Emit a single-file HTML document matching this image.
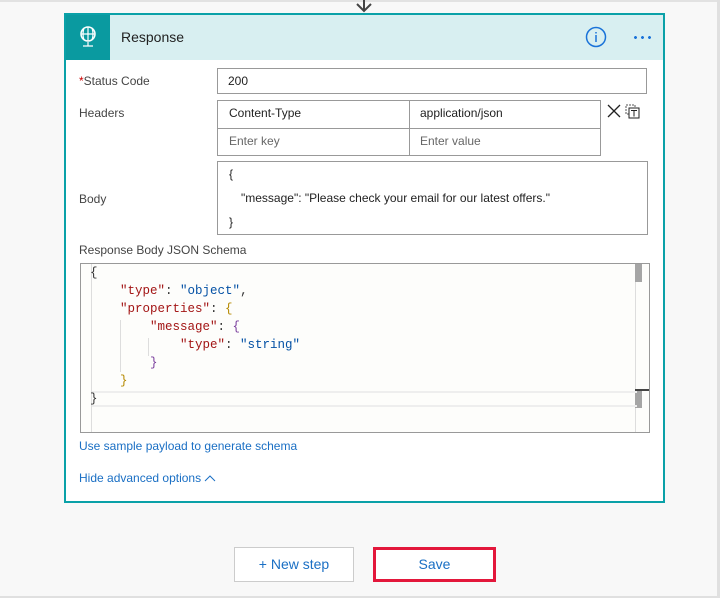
<!DOCTYPE html>
<html><head><style>
*{box-sizing:border-box;margin:0;padding:0}
body{width:720px;height:598px;background:#f8f8f8;font-family:"Segoe UI","Liberation Sans",sans-serif;font-size:12px;color:#333;position:relative;overflow:hidden}
.abs{position:absolute}
.card{left:64px;top:13px;width:601px;height:490px;border:2px solid #0aa1a8;background:#fff}
.hdr{left:0;top:0;width:597px;height:45px;background:#d8eff1}
.ic{left:0;top:0;width:44px;height:45px;background:#0a9aa0}
.lbl{color:#444;font-size:12px}
.inp{border:1px solid #999;background:#fff;font-size:12px;color:#222;padding-left:10px}
.code{font-family:"Liberation Mono",monospace;font-size:12.5px;white-space:pre;line-height:18px}
.k{color:#a31515}.v{color:#0451a5}.b{color:#7a3e9d}.y{color:#b58900}
.link{color:#1a6fc4;font-size:12px}
</style></head><body>
<div class="abs" style="left:0;top:0;width:720px;height:2px;background:#e2e2e2"></div>
<div class="abs" style="left:717px;top:0;width:3px;height:598px;background:#e0e0e0"></div>
<div class="abs" style="left:0;top:596px;width:720px;height:2px;background:#e0e0e0"></div>
<svg class="abs" style="left:354px;top:0" width="20" height="14"><path d="M10 0v10M3 4l7 7 7-7" stroke="#444" stroke-width="2" fill="none"/></svg>
<div class="abs card">
 <div class="abs hdr">
  <div class="abs ic"><svg width="44" height="45"><circle cx="22" cy="19" r="7" stroke="#fff" stroke-width="1.5" fill="none"/><path d="M15 19h14M22 12v14M18 13q-2 6 0 12M26 13q2 6 0 12M22 27v4M17 31h10" stroke="#fff" stroke-width="1.2" fill="none"/></svg></div>
  <div class="abs" style="left:55px;top:14px;font-size:14px;color:#222">Response</div>
  <svg class="abs" style="left:519px;top:11px" width="22" height="22"><circle cx="11" cy="11" r="9.5" stroke="#1a73d9" stroke-width="1.5" fill="none"/><path d="M11 9v7M11 6v1.5" stroke="#1a73d9" stroke-width="1.5"/></svg>
  <div class="abs" style="left:566px;top:21px;width:20px;height:3px;background:radial-gradient(circle,#1a73d9 1.3px,transparent 1.6px) 0 0/7px 3px"></div>
 </div>
 <div class="abs lbl" style="left:13px;top:59px"><span style="color:#c00">*</span>Status Code</div>
 <div class="abs inp" style="left:151px;top:53px;width:430px;height:26px;line-height:24px">200</div>
 <div class="abs lbl" style="left:13px;top:91px">Headers</div>
 <div class="abs" style="left:151px;top:85px;width:384px;height:56px;border:1px solid #999">
  <div class="abs" style="left:0;top:27px;width:382px;height:1px;background:#999"></div>
  <div class="abs" style="left:191px;top:0;width:1px;height:54px;background:#999"></div>
  <div class="abs" style="left:11px;top:5px;color:#222">Content-Type</div>
  <div class="abs" style="left:202px;top:5px;color:#222">application/json</div>
  <div class="abs" style="left:11px;top:33px;color:#666">Enter key</div>
  <div class="abs" style="left:202px;top:33px;color:#666">Enter value</div>
 </div>
 <svg class="abs" style="left:541px;top:89px" width="14" height="14"><path d="M1 1l12 12M13 1L1 13" stroke="#222" stroke-width="1.3"/></svg>
 <svg class="abs" style="left:559px;top:89px" width="16" height="16"><rect x="1" y="1" width="9" height="9" stroke="#555" stroke-dasharray="2 1" fill="none"/><rect x="4" y="4" width="10" height="10" stroke="#222" fill="#fff"/><path d="M6 6.5h6M9 6.5v6" stroke="#222"/></svg>
 <div class="abs lbl" style="left:13px;top:177px">Body</div>
 <div class="abs" style="left:151px;top:146px;width:431px;height:74px;border:1px solid #999;color:#222;line-height:24px;padding:0 0 0 11px">{<br><span style="padding-left:12px">"message": "Please check your email for our latest offers."</span><br>}</div>
 <div class="abs lbl" style="left:13px;top:228px">Response Body JSON Schema</div>
 <div class="abs" style="left:14px;top:248px;width:570px;height:170px;border:1px solid #999;background:#fdfdfb">
  <div class="abs" style="left:10px;top:0;width:1px;height:168px;background:#ddd"></div>
  <div class="abs" style="left:554px;top:0;width:1px;height:168px;background:#ddd"></div>
  <div class="abs" style="left:554px;top:0;width:7px;height:18px;background:#a5a5a5"></div>
  <div class="abs" style="left:554px;top:125px;width:14px;height:2px;background:#444"></div>
  <div class="abs" style="left:554px;top:127px;width:7px;height:17px;background:#a5a5a5"></div>
  <div class="abs" style="left:11px;top:127px;width:545px;height:16px;border-top:2px solid #eee;border-bottom:2px solid #eee"></div>
  <div class="abs" style="left:39px;top:56px;width:1px;height:52px;background:#ddd"></div>
  <div class="abs" style="left:67px;top:74px;width:1px;height:18px;background:#ddd"></div>
  <div class="abs code" style="left:9px;top:0">{
    <span class="k">"type"</span>: <span class="v">"object"</span>,
    <span class="k">"properties"</span>: <span class="y">{</span>
        <span class="k">"message"</span>: <span class="b">{</span>
            <span class="k">"type"</span>: <span class="v">"string"</span>
        <span class="b">}</span>
    <span class="y">}</span>
}</div>
 </div>
 <div class="abs link" style="left:13px;top:424px">Use sample payload to generate schema</div>
 <div class="abs link" style="left:13px;top:456px">Hide advanced options <svg width="12" height="8"><path d="M1 7l5-5 5 5" stroke="#1a6fc4" fill="none"/></svg></div>
</div>
<div class="abs" style="left:234px;top:547px;width:120px;height:35px;border:1px solid #ccc;background:#fff;color:#1a6fc4;font-size:14px;text-align:center;line-height:33px">+ New step</div>
<div class="abs" style="left:373px;top:547px;width:123px;height:35px;border:3px solid #e3173b;background:#fff;color:#1a6fc4;font-size:14px;text-align:center;line-height:29px">Save</div>
</body></html>
